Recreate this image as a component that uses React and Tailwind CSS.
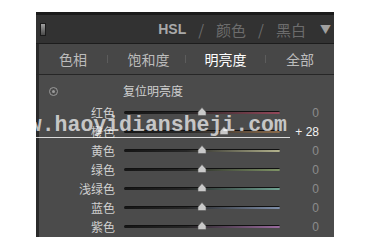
import React from "react";

const rows = [
  { name: "红色", to: "#94485a", value: 0 },
  { name: "橙色", to: "#8a6a4a", value: 28 },
  { name: "黄色", to: "#b4b48e", value: 0 },
  { name: "绿色", to: "#7f9466", value: 0 },
  { name: "浅绿色", to: "#6fa493", value: 0 },
  { name: "蓝色", to: "#7f8fab", value: 0 },
  { name: "紫色", to: "#9a6a9e", value: 0 },
];

function Slider({ to, value }) {
  const left = 78 + (value / 100) * 78;
  return (
    <div className="relative w-[156px] h-[9px] flex items-center">
      <div
        className="w-full h-[3px] rounded-full border-t border-[#111]"
        style={{ background: `linear-gradient(to right, #151515, #262626 40%, ${to})` }}
      />
      <svg
        className="absolute top-[-1px]"
        style={{ left: left - 5 }}
        width="10"
        height="9"
        viewBox="0 0 10 9"
      >
        <path d="M5 0.5 L9 5 L9 8.5 L1 8.5 L1 5 Z" fill="#c9c9c9" stroke="#5a5a5a" strokeWidth="0.6" />
      </svg>
    </div>
  );
}

export default function App() {
  return (
    <div className="w-[370px] h-[250px] bg-white overflow-hidden relative" style={{ fontFamily: '"Noto Sans CJK SC", "Liberation Sans", sans-serif' }}>
      <div className="ml-[36px] mt-[12px] w-[298px] h-[225px] bg-[#2a2a2a] border-t-[3px] border-[#1b1b1b] flex flex-col">
        {/* header */}
        <div className="h-[28px] flex items-center pl-[4px] pr-[3px] bg-[#323232]">
          <div className="w-[6px] h-[13px] border border-[#1a1a1a] bg-gradient-to-b from-[#a0a0a0] to-[#4a4a4a]" />
          <div className="ml-auto flex items-center text-[15px] leading-none text-[#6c6c6c]">
            <span className="text-[#a9a9a9] text-[14px] font-bold" style={{ fontFamily: '"Liberation Sans", sans-serif' }}>HSL</span>
            <span className="mx-[12px]">/</span>
            <span>颜色</span>
            <span className="mx-[12px]">/</span>
            <span>黑白</span>
            <span className="ml-[14px] text-[11px] text-[#a0a0a0]">▼</span>
          </div>
        </div>
        <div className="h-[1px] bg-[#1c1c1c]" />
        {/* tabs */}
        <div className="h-[30px] ml-[3px] bg-[#474747] flex items-center text-[14px] text-[#bcbcbc]">
          <div className="w-[68px] text-center">色相</div>
          <div className="w-[1px] h-[8px] bg-[#5c5c5c]" />
          <div className="w-[77px] text-center pl-[4px]">饱和度</div>
          <div className="w-[1px] h-[8px] bg-[#5c5c5c]" />
          <div className="w-[79px] text-center text-white">明亮度</div>
          <div className="w-[1px] h-[8px] bg-[#5c5c5c]" />
          <div className="flex-1 text-center">全部</div>
        </div>
        <div className="h-[1px] bg-[#262626]" />
        {/* content */}
        <div className="flex-1 ml-[3px] bg-[#4b4b4b] pt-[4px] text-[12px] text-[#cfcfcf] overflow-hidden">
          <div className="h-[24px] flex items-center">
            <div className="ml-[10px] w-[9px] h-[9px] rounded-full border border-[#9a9a9a] flex items-center justify-center">
              <div className="w-[3px] h-[3px] rounded-full bg-[#9a9a9a]" />
            </div>
            <span className="ml-[65px]">复位明亮度</span>
          </div>
          {rows.map((r) => (
            <div key={r.name} className="h-[19px] flex items-center">
              <div className="w-[76px] text-right leading-none">{r.name}</div>
              <div className="ml-[9px]">
                <Slider to={r.to} value={r.value} />
              </div>
              <div className={`w-[39px] text-right leading-none ${r.value ? "text-[#f2f2f2]" : "text-[#8c8c8c]"}`} style={{ fontFamily: '"Liberation Sans", sans-serif' }}>
                {r.value ? `+ ${r.value}` : "0"}
              </div>
            </div>
          ))}
        </div>
      </div>
      {/* watermark */}
      <div
        className="absolute left-[3px] top-[114px] text-[21.5px] font-bold text-white/70 leading-[23px] border-b border-white/80 pr-[3px]"
        style={{ fontFamily: '"Liberation Mono", monospace' }}
      >
        www.haoyidiansheji.com
      </div>
    </div>
  );
}
